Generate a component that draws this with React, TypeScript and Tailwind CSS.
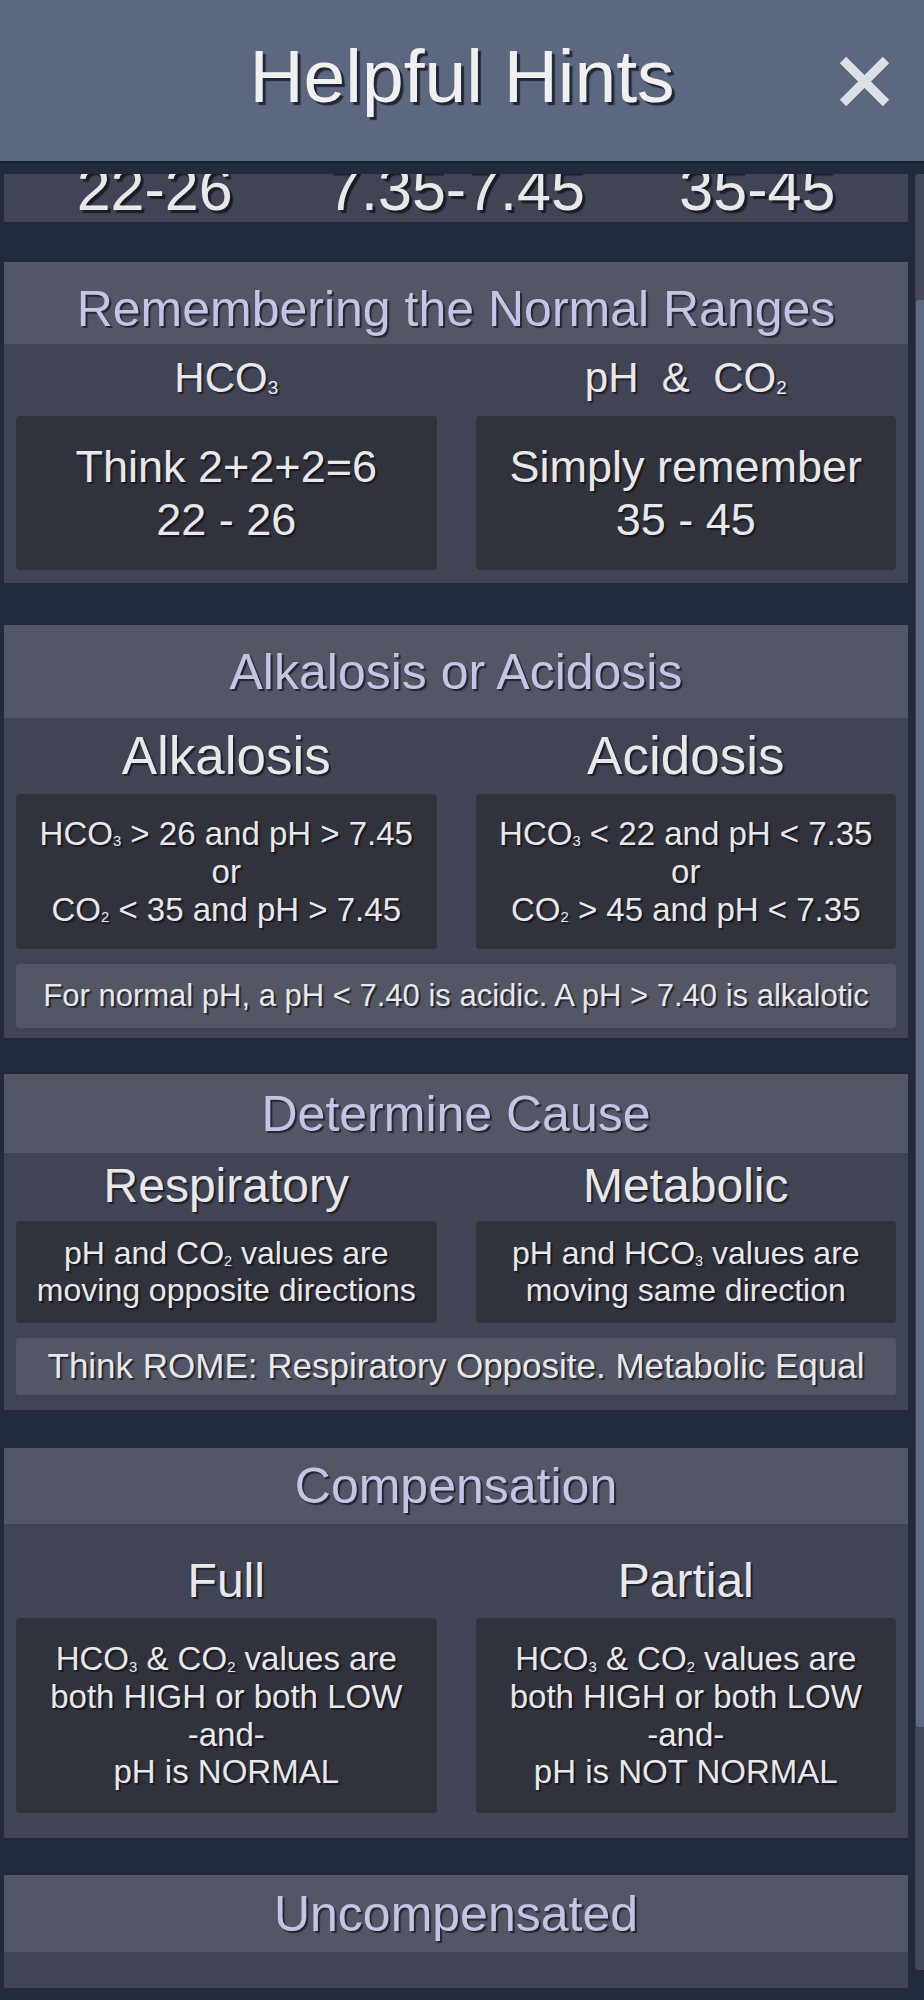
import type { ReactNode } from 'react';

const shadowBig = '[text-shadow:3px_3px_1px_rgba(10,12,20,0.7)]';
const shadow = '[text-shadow:2px_2px_1px_rgba(10,12,20,0.65)]';

function Sub({ children }: { children: ReactNode }) {
  return <span className="relative top-[0.12em] text-[0.45em] leading-none">{children}</span>;
}

function SectionTitle({ text, className }: { text: string; className: string }) {
  return (
    <div className={`flex items-center justify-center bg-[#525665] ${className}`}>
      <h2 className={`text-[50px] leading-none text-[#c4c4e4] ${shadow}`}>{text}</h2>
    </div>
  );
}

function Columns({ left, right, className }: { left: ReactNode; right: ReactNode; className: string }) {
  return (
    <div className={`grid grid-cols-2 gap-[39px] px-3 text-center text-[#e8e8e8] ${shadow} ${className}`}>
      <div>{left}</div>
      <div>{right}</div>
    </div>
  );
}

function Box({ children, className }: { children: ReactNode; className: string }) {
  return (
    <div className={`flex flex-col items-center justify-center rounded-[4px] bg-[#30323c] ${className}`}>
      {children}
    </div>
  );
}

function Note({ children, className }: { children: ReactNode; className: string }) {
  return (
    <div
      className={`mx-3 flex items-center justify-center rounded-[3px] bg-[#525665] text-[#e8e8e8] ${shadow} ${className}`}
    >
      {children}
    </div>
  );
}

export default function App() {
  return (
    <div
      className="flex h-[2000px] w-[924px] flex-col overflow-hidden bg-[#222a3d]"
      style={{ fontFamily: '"Liberation Sans", Arial, sans-serif' }}
    >
      {/* header */}
      <header className="relative flex h-[163px] shrink-0 items-center justify-center border-b-2 border-[#1b2131] bg-[#5c6880] pb-[8px]">
        <h1 className={`text-[75px] leading-none text-[#f0f0f0] ${shadowBig}`}>Helpful Hints</h1>
        <button className="absolute right-[34px] top-[56px] h-[51px] w-[51px]">
          <svg viewBox="0 0 51 51" className="h-full w-full">
            <path d="M4 4 L47 47 M47 4 L4 47" stroke="#dcdfe4" strokeWidth="9" />
          </svg>
        </button>
      </header>

      <div className="mt-[11px] flex h-[1814px] shrink-0">
        <div className="w-[908px] overflow-hidden pl-[4px]">
          {/* normal values, scrolled mostly out of view */}
          <section className="h-[48px] overflow-hidden bg-[#414455]">
            <div className={`-mt-[15px] grid grid-cols-3 text-center text-[61px] leading-none text-[#e8e8e8] ${shadowBig}`}>
              <div>22-26</div>
              <div>7.35-7.45</div>
              <div>35-45</div>
            </div>
          </section>

          <section className="mt-[40px] bg-[#414455] pb-[13px]">
            <SectionTitle text="Remembering the Normal Ranges" className="h-[82px] pt-[12px]" />
            <Columns
              className="pt-[13px] text-[42px] leading-none"
              left={<span>HCO<Sub>3</Sub></span>}
              right={<span>{'pH\u00a0 &\u00a0 CO'}<Sub>2</Sub></span>}
            />
            <Columns
              className="mt-[17px] text-[45px] leading-[53px]"
              left={
                <Box className="h-[154px]">
                  <div>Think 2+2+2=6</div>
                  <div>22 - 26</div>
                </Box>
              }
              right={
                <Box className="h-[154px]">
                  <div>Simply remember</div>
                  <div>35 - 45</div>
                </Box>
              }
            />
          </section>

          <section className="mt-[42px] bg-[#414455] pb-[10px]">
            <SectionTitle text="Alkalosis or Acidosis" className="h-[93px]" />
            <Columns className="pt-[11px] text-[53px] leading-none" left="Alkalosis" right="Acidosis" />
            <Columns
              className="mt-[12px] text-[33px] leading-[38px]"
              left={
                <Box className="h-[155px]">
                  <div>HCO<Sub>3</Sub> &gt; 26 and pH &gt; 7.45</div>
                  <div>or</div>
                  <div>CO<Sub>2</Sub> &lt; 35 and pH &gt; 7.45</div>
                </Box>
              }
              right={
                <Box className="h-[155px]">
                  <div>HCO<Sub>3</Sub> &lt; 22 and pH &lt; 7.35</div>
                  <div>or</div>
                  <div>CO<Sub>2</Sub> &gt; 45 and pH &lt; 7.35</div>
                </Box>
              }
            />
            <Note className="mt-[15px] h-[64px] text-[31px]">
              For normal pH, a pH &lt; 7.40 is acidic. A pH &gt; 7.40 is alkalotic
            </Note>
          </section>

          <section className="mt-[36px] bg-[#414455] pb-[15px]">
            <SectionTitle text="Determine Cause" className="h-[79px]" />
            <Columns className="pt-[9px] text-[48px] leading-none" left="Respiratory" right="Metabolic" />
            <Columns
              className="mt-[11px] text-[32px] leading-[37px]"
              left={
                <Box className="h-[102px]">
                  <div>pH and CO<Sub>2</Sub> values are</div>
                  <div>moving opposite directions</div>
                </Box>
              }
              right={
                <Box className="h-[102px]">
                  <div>pH and HCO<Sub>3</Sub> values are</div>
                  <div>moving same direction</div>
                </Box>
              }
            />
            <Note className="mt-[15px] h-[57px] text-[35px]">
              Think ROME: Respiratory Opposite. Metabolic Equal
            </Note>
          </section>

          <section className="mt-[38px] bg-[#414455] pb-[25px]">
            <SectionTitle text="Compensation" className="h-[76px]" />
            <Columns className="pt-[33px] text-[48px] leading-none" left="Full" right="Partial" />
            <Columns
              className="mt-[13px] text-[33px] leading-[37.7px]"
              left={
                <Box className="h-[195px]">
                  <div>HCO<Sub>3</Sub> &amp; CO<Sub>2</Sub> values are</div>
                  <div>both HIGH or both LOW</div>
                  <div>-and-</div>
                  <div>pH is NORMAL</div>
                </Box>
              }
              right={
                <Box className="h-[195px]">
                  <div>HCO<Sub>3</Sub> &amp; CO<Sub>2</Sub> values are</div>
                  <div>both HIGH or both LOW</div>
                  <div>-and-</div>
                  <div>pH is NOT NORMAL</div>
                </Box>
              }
            />
          </section>

          <section className="mt-[37px] bg-[#414455] pb-[25px]">
            <SectionTitle text="Uncompensated" className="h-[77px]" />
            <Columns className="pt-[34px] text-[48px] leading-none" left="Respiratory" right="Metabolic" />
          </section>
        </div>

        {/* scrollbar */}
        <div className="ml-[7px] h-[1796px] w-[9px] rounded-l-[3px] border-l border-[#3a3d4a] bg-[#464958]">
          <div className="mt-[126px] h-[1427px] rounded-l-[3px] bg-[#5e6a84]" />
        </div>
      </div>
    </div>
  );
}
